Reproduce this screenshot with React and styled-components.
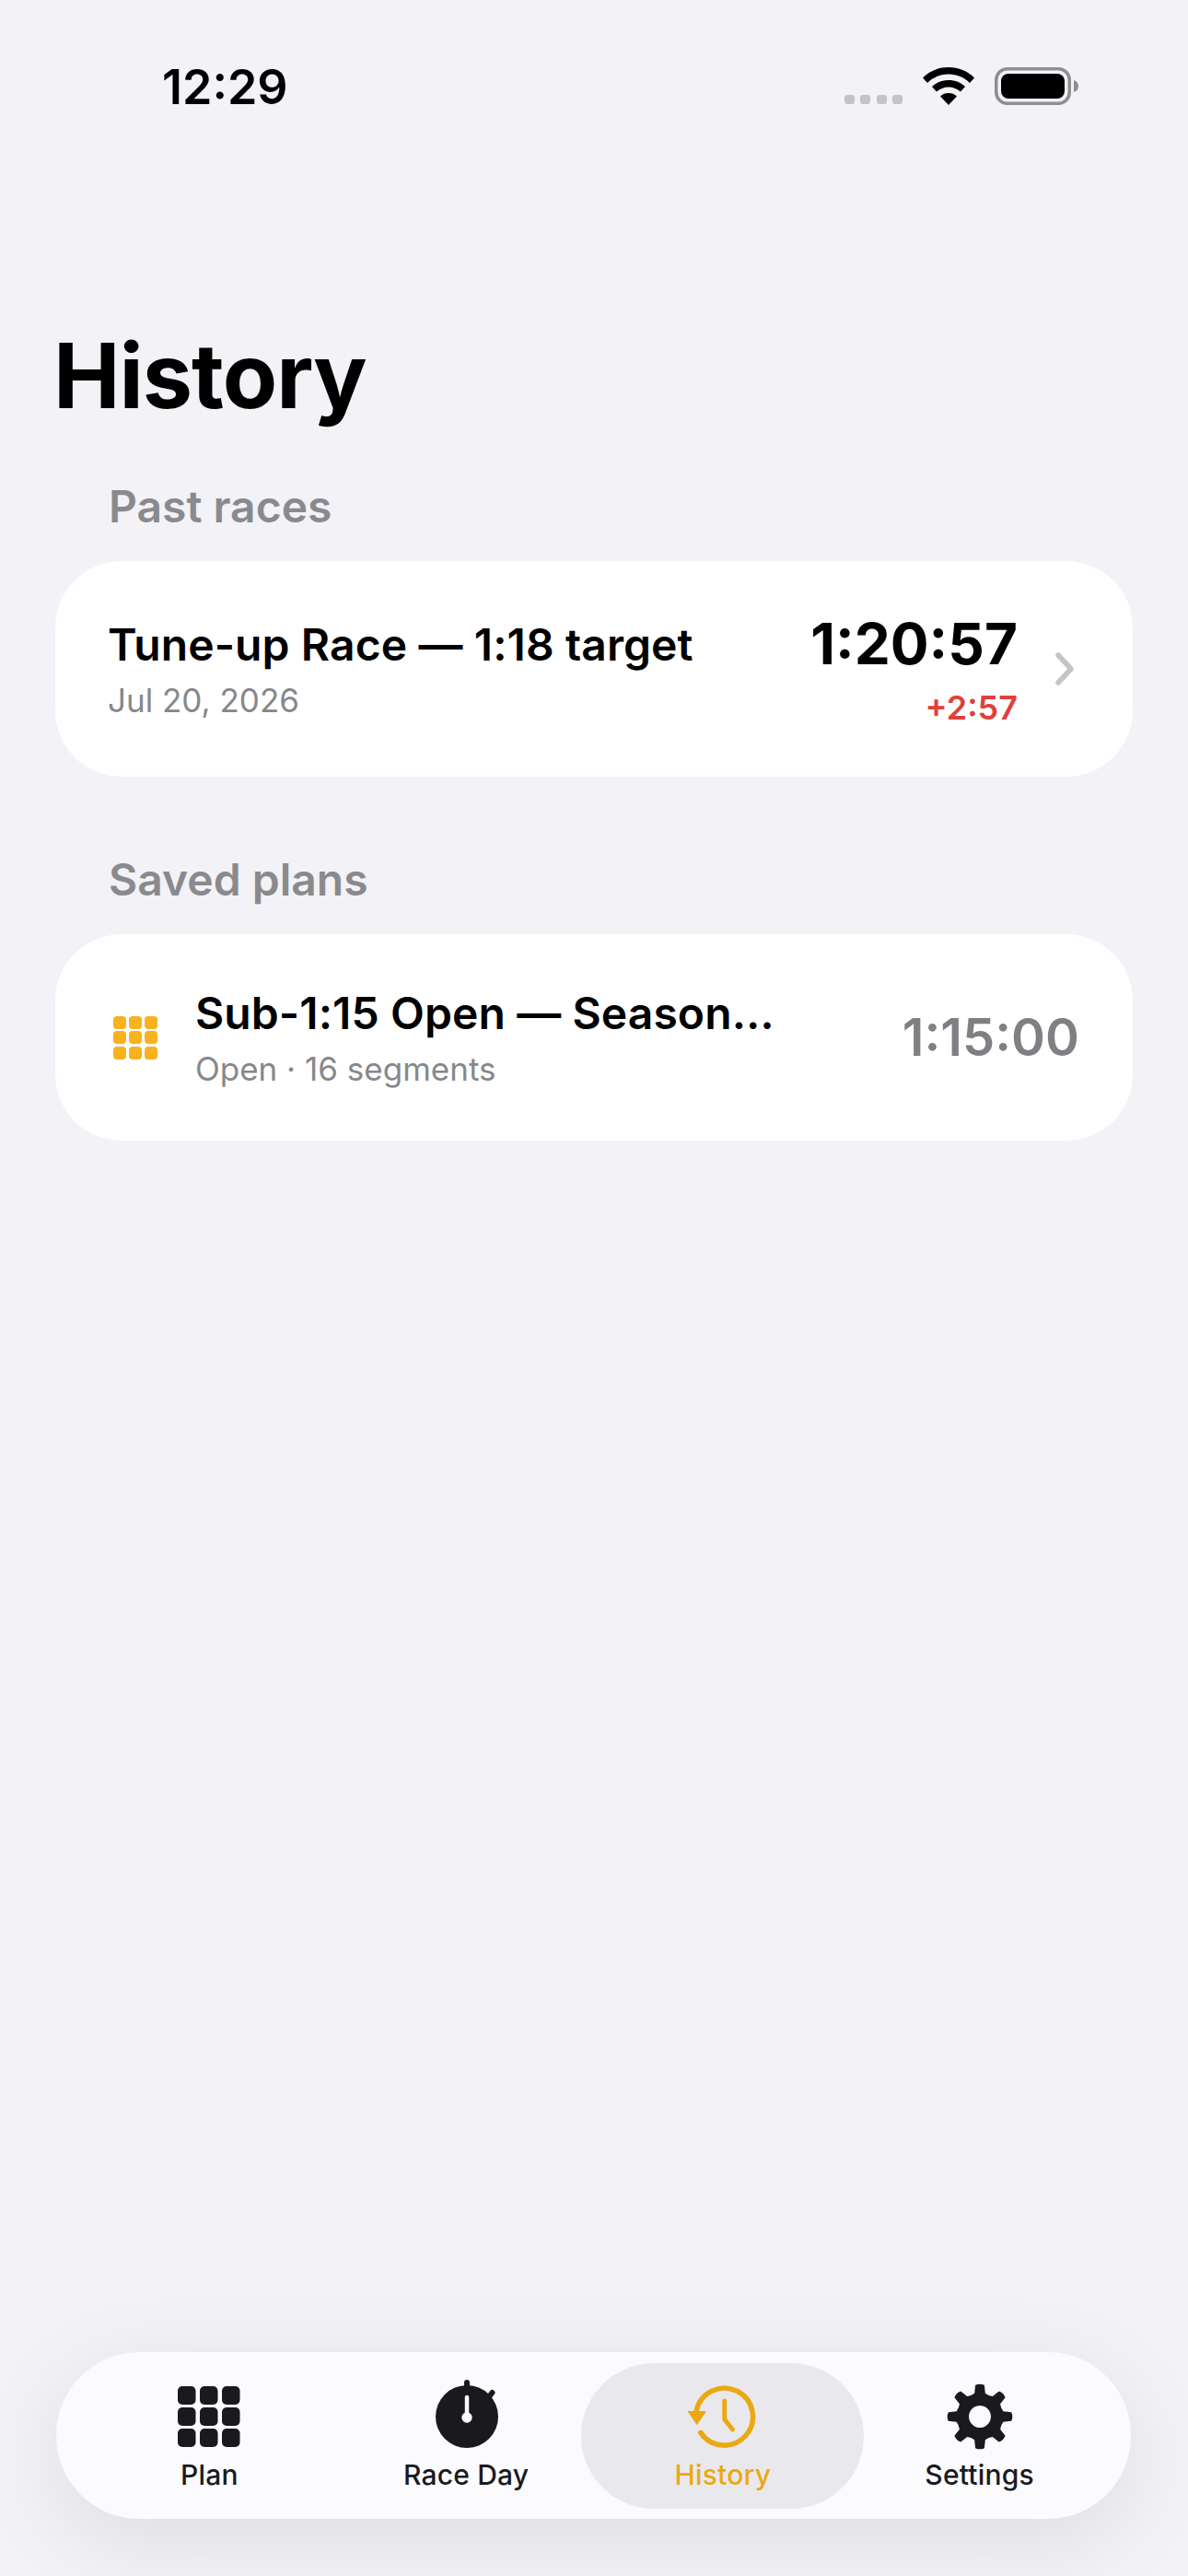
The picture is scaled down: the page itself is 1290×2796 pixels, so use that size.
import React from "react";
import styled, { createGlobalStyle } from "styled-components";

const Global = createGlobalStyle`
  html, body { margin: 0; padding: 0; background: #f2f2f7; }
  * { box-sizing: border-box; }
`;

const Page = styled.div`
  width: 1290px;
  height: 2796px;
  display: flex;
  flex-direction: column;
  background: #f2f2f7;
  font-family: Inter, "Liberation Sans", sans-serif;
  color: #000;
  overflow: hidden;
`;

const StatusBar = styled.div`
  height: 132px;
  padding: 63px 119px 0 176px;
  display: flex;
  justify-content: space-between;
  align-items: flex-start;
`;

const Clock = styled.div`
  font-size: 52px;
  font-weight: 600;
  line-height: 64px;
`;

const StatusIcons = styled.div`
  display: flex;
  align-items: flex-start;
  gap: 22px;
  margin-top: 10px;
`;

const Signal = styled.div`
  display: flex;
  gap: 6.500px;
  margin-top: 30px;
`;

const SignalDot = styled.span`
  width: 11px;
  height: 10px;
  border-radius: 3px;
  background: #c3c3c8;
`;

const Title = styled.h1`
  margin: 216px 0 0 58px;
  font-size: 97px;
  line-height: 120px;
  font-weight: 700;
  letter-spacing: -1px;
`;

const SectionLabel = styled.div`
  margin: ${(p) => p.$top}px 0 0 118px;
  font-size: 48px;
  line-height: 58px;
  font-weight: 600;
  color: #8a8a8e;
`;

const Card = styled.div`
  margin: 30px 60px 0;
  height: ${(p) => p.$height}px;
  padding: 0 ${(p) => p.$right}px 0 ${(p) => p.$left}px;
  background: #fff;
  border-radius: 72px;
  display: flex;
  align-items: center;
`;

const RowText = styled.div`
  flex: 1;
  min-width: 0;
  display: flex;
  flex-direction: column;
  gap: 9px;
  padding-top: 1px;
`;

const RowTitle = styled.div`
  font-size: 48px;
  line-height: 58px;
  font-weight: 600;
  white-space: nowrap;
  letter-spacing: 0.1px;
`;

const RowSub = styled.div`
  font-size: 35px;
  line-height: 44px;
  font-weight: 400;
  color: #87878b;
`;

const Results = styled.div`
  display: flex;
  flex-direction: column;
  align-items: flex-end;
  gap: 13px;
  margin-top: 3px;
`;

const Elapsed = styled.div`
  font-size: 62px;
  line-height: 68px;
  font-weight: 700;
`;

const Delta = styled.div`
  font-size: 36px;
  line-height: 44px;
  font-weight: 600;
  color: #e0403a;
`;

const Chevron = styled.svg`
  margin-left: 41px;
  flex: none;
`;

const PlanGrid = styled.div`
  flex: none;
  width: 48px;
  margin-right: 41px;
  display: grid;
  grid-template-columns: repeat(3, 14px);
  grid-auto-rows: 14px;
  gap: 2.500px 3px;
`;

const PlanCell = styled.span`
  background: #f8b11f;
  border-radius: 4px;
`;

const PlanTime = styled.div`
  font-size: 56px;
  line-height: 64px;
  font-weight: 600;
  color: #808084;
`;

const TabBar = styled.nav`
  margin: auto 62px 62px 61px;
  height: 181px;
  padding: 0 25px 0 27px;
  border-radius: 90px;
  background: #fbfbfe;
  box-shadow: 0 24px 100px rgba(0, 0, 0, 0.09);
  display: grid;
  grid-template-columns: repeat(4, 1fr);
`;

const Tab = styled.div`
  position: relative;
  display: flex;
  flex-direction: column;
  align-items: center;
  padding-top: 30px;
  color: ${(p) => (p.$active ? "#eaa913" : "#1a1a1e")};
`;

const ActivePill = styled.span`
  position: absolute;
  top: 12px;
  bottom: 11px;
  left: -15px;
  right: -14px;
  border-radius: 79px;
  background: #e9e9ed;
`;

const TabIcon = styled.svg`
  position: relative;
  display: block;
`;

const TabLabel = styled.span`
  position: relative;
  margin-top: 5px;
  font-size: 30px;
  line-height: 36px;
  font-weight: 500;
  letter-spacing: 0.2px;
`;

const gearPath = (() => {
  const c = 40;
  const pts = [];
  const n = 8;
  for (let i = 0; i < n; i++) {
    const a = (i * Math.PI * 2) / n - Math.PI / 2;
    const d = Math.PI / n;
    const at = (r, t) => `${(c + r * Math.cos(t)).toFixed(2)} ${(c + r * Math.sin(t)).toFixed(2)}`;
    pts.push(`${i === 0 ? "M" : "L"}${at(26, a - d * 0.58)}`);
    pts.push(`L${at(34.500, a - d * 0.36)}`);
    pts.push(`Q${at(36.500, a)} ${at(34.500, a + d * 0.36)}`);
    pts.push(`L${at(26, a + d * 0.58)}`);
    pts.push(`Q${at(24.500, a + d)} ${at(26, a + d * 1.42)}`);
  }
  return pts.join(" ") + " Z";
})();

const PlanIcon = () => (
  <TabIcon width="80" height="80" viewBox="0 0 80 80" fill="#1a1a1e">
    {[0, 1, 2].flatMap((r) =>
      [0, 1, 2].map((c) => (
        <rect key={`${r}${c}`} x={6 + c * 24} y={7 + r * 23} width="19.5" height="20" rx="5" />
      ))
    )}
  </TabIcon>
);

const StopwatchIcon = () => (
  <TabIcon width="80" height="80" viewBox="0 0 80 80">
    <circle cx="41" cy="40" r="34" fill="#1a1a1e" />
    <path d="M41 3V10M68.500 14L65 18.500" stroke="#1a1a1e" strokeWidth="6" strokeLinecap="round" fill="none" />
    <path d="M41 19V41" stroke="#fbfbfe" strokeWidth="4.500" strokeLinecap="round" fill="none" />
    <circle cx="41" cy="41" r="5.700" fill="#fbfbfe" />
  </TabIcon>
);

const HistoryIcon = () => (
  <TabIcon width="80" height="80" viewBox="0 0 80 80">
    <g transform="translate(-4.5 0)">
      <path
        d="M15.600 34A31 31 0 1 1 20.250 57.400"
        stroke="#eaa913"
        strokeWidth="5.500"
        strokeLinecap="round"
        fill="none"
      />
      <path d="M6.750 34.500H25.750L16.250 48.500Z" fill="#eaa913" stroke="#eaa913" strokeWidth="1" strokeLinejoin="round" />
      <path d="M46.250 23V43L55 54" stroke="#eaa913" strokeWidth="5" strokeLinecap="round" strokeLinejoin="round" fill="none" />
    </g>
  </TabIcon>
);

const GearIcon = () => (
  <TabIcon width="80" height="80" viewBox="0 0 80 80">
    <path d={`${gearPath} M40 28a12 12 0 1 0 0.01 0Z`} fill="#1a1a1e" fillRule="evenodd" />
  </TabIcon>
);

const tabs = [
  { label: "Plan", Icon: PlanIcon },
  { label: "Race Day", Icon: StopwatchIcon },
  { label: "History", Icon: HistoryIcon, active: true },
  { label: "Settings", Icon: GearIcon },
];

export default function App() {
  return (
    <Page>
      <Global />
      <StatusBar>
        <Clock>12:29</Clock>
        <StatusIcons>
          <Signal>
            {[0, 1, 2, 3].map((i) => (
              <SignalDot key={i} />
            ))}
          </Signal>
          <svg width="56" height="41" viewBox="0 0 56 41">
            <path d="M28 0C17 0 7.5 4 0 11.5L5 17C11 11 19 7.5 28 7.5S45 11 51 17L56 11.5C48.500 4 39 0 28 0Z" />
            <path d="M28 14C21 14 14.500 16.500 10 21L15 26.500C18.500 23.500 23 21.500 28 21.500S37.500 23.500 41 26.500L46 21C41.500 16.500 35 14 28 14Z" />
            <path d="M28 28C24.500 28 21.500 29 19 31.500L28 41L37 31.500C34.500 29 31.500 28 28 28Z" />
          </svg>
          <svg width="91" height="41" viewBox="0 0 91 41">
            <rect x="1.750" y="1.750" width="79.500" height="37.500" rx="12" fill="none" stroke="#8e8e93" strokeWidth="3.500" />
            <rect x="7" y="7" width="69" height="27" rx="8" fill="#000" />
            <path d="M86 14C89 15 91 17 91 20.500S89 26 86 27Z" fill="#8e8e93" />
          </svg>
        </StatusIcons>
      </StatusBar>

      <Title>History</Title>

      <SectionLabel $top={53}>Past races</SectionLabel>
      <Card $height={234} $left={57} $right={64}>
        <RowText>
          <RowTitle>Tune-up Race — 1:18 target</RowTitle>
          <RowSub>Jul 20, 2026</RowSub>
        </RowText>
        <Results>
          <Elapsed>1:20:57</Elapsed>
          <Delta>+2:57</Delta>
        </Results>
        <Chevron width="20" height="36" viewBox="0 0 20 36">
          <path d="M3 3L17 18L3 33" stroke="#c4c4c7" strokeWidth="5.500" strokeLinecap="round" strokeLinejoin="round" fill="none" />
        </Chevron>
      </Card>

      <SectionLabel $top={83}>Saved plans</SectionLabel>
      <Card $height={224} $left={63} $right={58}>
        <PlanGrid>
          {Array.from({ length: 9 }, (_, i) => (
            <PlanCell key={i} />
          ))}
        </PlanGrid>
        <RowText>
          <RowTitle>Sub-1:15 Open — Season…</RowTitle>
          <RowSub>Open · 16 segments</RowSub>
        </RowText>
        <PlanTime>1:15:00</PlanTime>
      </Card>

      <TabBar>
        {tabs.map(({ label, Icon, active }) => (
          <Tab key={label} $active={active}>
            {active && <ActivePill />}
            <Icon />
            <TabLabel>{label}</TabLabel>
          </Tab>
        ))}
      </TabBar>
    </Page>
  );
}
